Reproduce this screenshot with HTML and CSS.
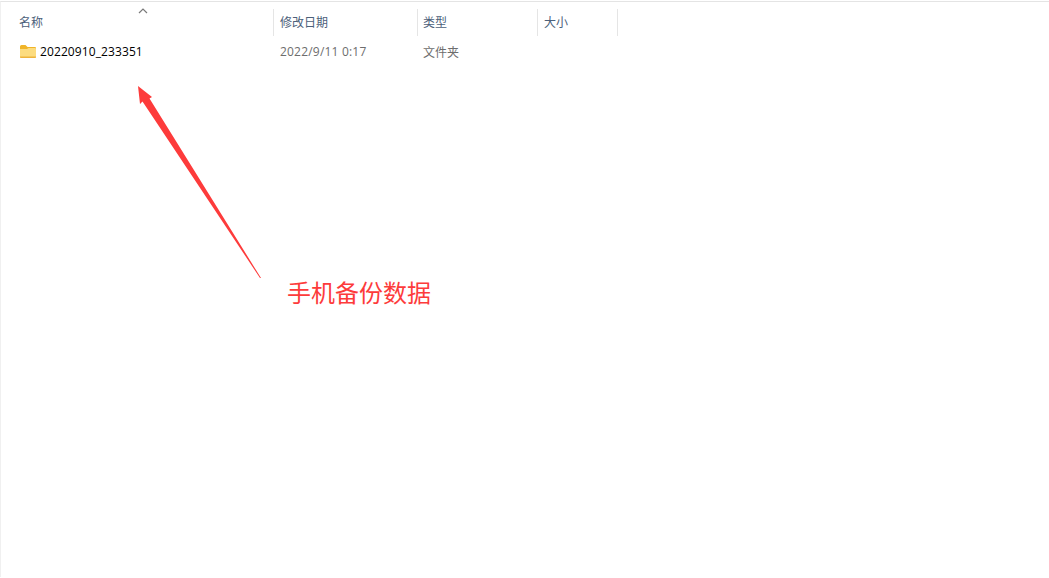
FILE: index.html
```html
<!DOCTYPE html>
<html lang="zh-CN">
<head>
    <meta charset="UTF-8">
    <meta name="viewport" content="width=device-width, initial-scale=1.0">
    <title>手机备份数据</title>
    <link rel="stylesheet" href="styles.css">
</head>
<body>
    <div class="explorer">
        <div class="list-header">
            <div class="col col-name">
                名称
                <svg class="sort-arrow" width="10" height="6" viewBox="0 0 10 6">
                    <path d="M1 5 L5 1 L9 5" fill="none" stroke="#7a7a7a" stroke-width="1.2"/>
                </svg>
            </div>
            <div class="col col-date">修改日期</div>
            <div class="col col-type">类型</div>
            <div class="col col-size">大小</div>
        </div>
        <div class="list-row">
            <div class="cell cell-name">
                <svg class="folder-icon" width="16" height="13" viewBox="0 0 16 13">
                    <path d="M0 1.5 Q0 0 1.5 0 H5.5 L7.5 2 H15 Q16 2 16 3 V5 H0 Z" fill="#f0b429"/>
                    <path d="M0 4 L7 4 L8.5 3 H15 Q16 3 16 4 V12 Q16 13 15 13 H1 Q0 13 0 12 Z" fill="#fcdc7f"/>
                    <path d="M0 11.5 H16 V12 Q16 13 15 13 H1 Q0 13 0 12 Z" fill="#eeb33c"/>
                </svg>
                <span>20220910_233351</span>
            </div>
            <div class="cell cell-date">2022/9/11 0:17</div>
            <div class="cell cell-type">文件夹</div>
        </div>

        <!-- annotation on top of the screenshot -->
        <svg class="note-arrow" width="1049" height="578" viewBox="0 0 1049 578">
            <polygon points="138,86 152,97 149.5,98.5 261,278 260,278 142.5,101.5 140,104" fill="#fd3b3b"/>
        </svg>
        <div class="note-label">手机备份数据</div>
    </div>
</body>
</html>
```

FILE: styles.css
```css
/* CSS styles */
html, body {
    margin: 0;
    padding: 0;
    background-color: #fff;
}

.explorer {
    position: relative;
    box-sizing: border-box;
    width: 1049px;
    height: 576px;
    margin-top: 1px;
    overflow: hidden;
    padding-top: 7px;
    border-top: 1px solid #e4e4e4;
    border-left: 1px solid #f0f0f0;
    font-family: "Noto Sans CJK SC", "Liberation Sans", sans-serif;
    font-size: 12px;
}

.list-header {
    display: flex;
    height: 27px;
}

.col {
    position: relative;
    box-sizing: border-box;
    height: 27px;
    padding-left: 6px;
    line-height: 26px;
    color: #4c607a;
    border-right: 1px solid #e5e5e5;
}

.col-name {
    width: 273px;
    padding-left: 18px;
}

.col-date {
    width: 144px;
}

.col-type {
    width: 120px;
    padding-left: 5px;
}

.col-size {
    width: 80px;
}

.sort-arrow {
    position: absolute;
    left: 137px;
    top: -1px;
}

.list-row {
    display: flex;
    align-items: center;
    height: 22px;
    margin-top: 4px;
}

.cell {
    box-sizing: border-box;
    padding-left: 6px;
    color: #6d6d6d;
}

.cell-name {
    display: flex;
    align-items: center;
    gap: 4px;
    width: 273px;
    padding-left: 19px;
    color: #000;
    font-family: "Open Sans", "Noto Sans CJK SC", sans-serif;
    letter-spacing: 0.1px;
}

.cell-date {
    width: 144px;
    font-family: "Open Sans", "Noto Sans CJK SC", sans-serif;
    letter-spacing: 0.2px;
}

.cell-type {
    width: 120px;
    padding-left: 5px;
}

.folder-icon {
    flex: none;
}

.note-arrow {
    position: absolute;
    left: -1px;
    top: -2px;
}

.note-label {
    position: absolute;
    left: 286px;
    top: 273px;
    font-size: 24px;
    line-height: 34px;
    color: #fd3b3b;
}
```
